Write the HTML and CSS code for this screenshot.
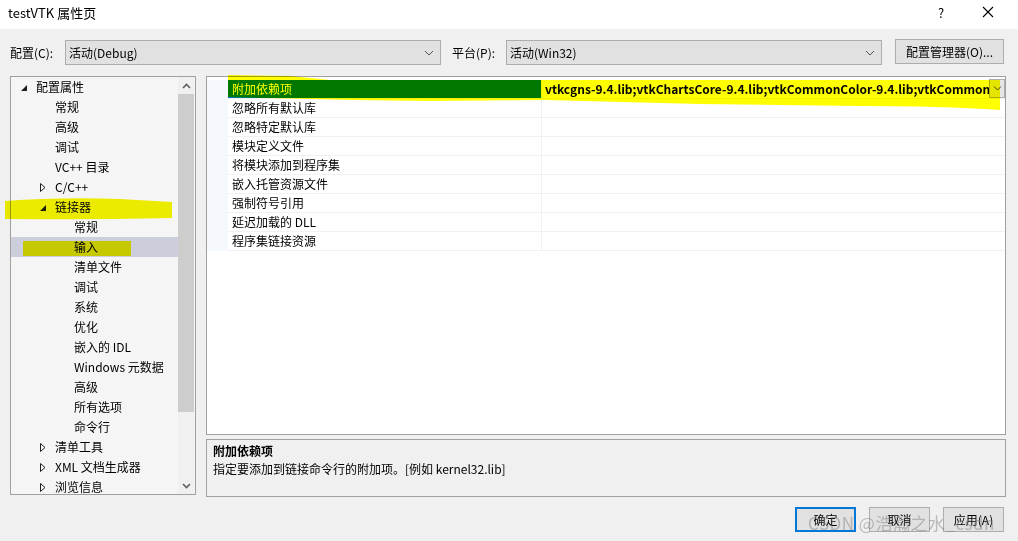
FILE: index.html
```html
<!DOCTYPE html>
<html lang="zh-CN">
<head>
<meta charset="UTF-8">
<title>testVTK 属性页</title>
<link rel="stylesheet" href="styles.css">
</head>
<body>

<div class="titlebar">
  <span class="title">testVTK 属性页</span>
  <span class="help">?</span>
  <span class="close">
    <svg width="12" height="12" viewBox="0 0 12 12"><path d="M1 1L11 11M11 1L1 11" stroke="#000" stroke-width="1.1"/></svg>
  </span>
</div>

<div class="toolbar">
  <label class="lbl">配置(C):</label>
  <div class="combo combo-config">
    <span>活动(Debug)</span>
    <svg class="chev" width="10" height="6" viewBox="0 0 10 6"><path d="M1 1L5 5L9 1" fill="none" stroke="#555"/></svg>
  </div>
  <label class="lbl lbl-platform">平台(P):</label>
  <div class="combo combo-platform">
    <span>活动(Win32)</span>
    <svg class="chev" width="10" height="6" viewBox="0 0 10 6"><path d="M1 1L5 5L9 1" fill="none" stroke="#555"/></svg>
  </div>
  <button class="btn btn-manager">配置管理器(O)...</button>
</div>

<div class="main">
  <div class="tree">
    <ul class="tree-list">
      <li class="lv0"><svg class="arrow" width="6" height="6" viewBox="0 0 6 6"><path d="M6 0V6H0Z" fill="#1e1e1e"/></svg>配置属性</li>
      <li class="lv1">常规</li>
      <li class="lv1">高级</li>
      <li class="lv1">调试</li>
      <li class="lv1">VC++ 目录</li>
      <li class="lv1"><svg class="arrow closed" width="6" height="9" viewBox="0 0 6 9"><path d="M0.5 0.5V8.5L5 4.5Z" fill="none" stroke="#1e1e1e"/></svg>C/C++</li>
      <li class="lv1"><svg class="arrow" width="6" height="6" viewBox="0 0 6 6"><path d="M6 0V6H0Z" fill="#1e1e1e"/></svg>链接器</li>
      <li class="lv2">常规</li>
      <li class="lv2 selected">输入</li>
      <li class="lv2">清单文件</li>
      <li class="lv2">调试</li>
      <li class="lv2">系统</li>
      <li class="lv2">优化</li>
      <li class="lv2">嵌入的 IDL</li>
      <li class="lv2">Windows 元数据</li>
      <li class="lv2">高级</li>
      <li class="lv2">所有选项</li>
      <li class="lv2">命令行</li>
      <li class="lv1"><svg class="arrow closed" width="6" height="9" viewBox="0 0 6 9"><path d="M0.5 0.5V8.5L5 4.5Z" fill="none" stroke="#1e1e1e"/></svg>清单工具</li>
      <li class="lv1"><svg class="arrow closed" width="6" height="9" viewBox="0 0 6 9"><path d="M0.5 0.5V8.5L5 4.5Z" fill="none" stroke="#1e1e1e"/></svg>XML 文档生成器</li>
      <li class="lv1"><svg class="arrow closed" width="6" height="9" viewBox="0 0 6 9"><path d="M0.5 0.5V8.5L5 4.5Z" fill="none" stroke="#1e1e1e"/></svg>浏览信息</li>
    </ul>
    <div class="scrollbar">
      <svg class="sb-arrow" width="9" height="6" viewBox="0 0 9 6"><path d="M1 5L4.5 1.5L8 5" fill="none" stroke="#606060" stroke-width="1.6"/></svg>
      <div class="sb-track"><div class="sb-thumb"></div></div>
      <svg class="sb-arrow" width="9" height="6" viewBox="0 0 9 6"><path d="M1 1L4.5 4.5L8 1" fill="none" stroke="#606060" stroke-width="1.6"/></svg>
    </div>
  </div>

  <div class="right">
    <div class="grid">
      <div class="gutter"></div>
      <div class="rows">
        <div class="row first">
          <div class="name">附加依赖项</div>
          <div class="value">
            <span class="value-text">vtkcgns-9.4.lib;vtkChartsCore-9.4.lib;vtkCommonColor-9.4.lib;vtkCommonComputationalGeometry-9.4.lib</span>
            <span class="drop">
              <svg width="9" height="5" viewBox="0 0 9 5"><path d="M1 0.5L4.5 4L8 0.5" fill="none" stroke="#444"/></svg>
            </span>
          </div>
        </div>
        <div class="row"><div class="name">忽略所有默认库</div><div class="value"></div></div>
        <div class="row"><div class="name">忽略特定默认库</div><div class="value"></div></div>
        <div class="row"><div class="name">模块定义文件</div><div class="value"></div></div>
        <div class="row"><div class="name">将模块添加到程序集</div><div class="value"></div></div>
        <div class="row"><div class="name">嵌入托管资源文件</div><div class="value"></div></div>
        <div class="row"><div class="name">强制符号引用</div><div class="value"></div></div>
        <div class="row"><div class="name">延迟加载的 DLL</div><div class="value"></div></div>
        <div class="row"><div class="name">程序集链接资源</div><div class="value"></div></div>
      </div>
    </div>
    <div class="desc">
      <div class="desc-title">附加依赖项</div>
      <div class="desc-text">指定要添加到链接命令行的附加项。[例如 kernel32.lib]</div>
    </div>
  </div>
</div>

<div class="footer">
  <button class="btn btn-ok">确定</button>
  <button class="btn">取消</button>
  <button class="btn">应用(A)</button>
</div>

<!-- highlighter strokes drawn over the screenshot -->
<svg class="marker" width="1018" height="541" viewBox="0 0 1018 541">
  <path d="M5 201 Q60 197 120 199 L172 202 L172 218 Q90 220 5 219 Z" fill="#f5f500"/>
  <rect x="23" y="241" width="108" height="15" fill="#f8f800"/>
  <path d="M228 75 L290 76 L330 80 L545 80 L1000 80 L1000 110 Q940 106 860 106 L700 104 L545 100 L430 101 Q330 100 228 97 Z" fill="#ffff00"/>
</svg>

<div class="watermark">CSDN @浩瀚之水_csdn</div>

</body>
</html>
```

FILE: styles.css
```css
body {
  margin: 0;
  width: 1018px;
  height: 541px;
  overflow: hidden;
  position: relative;
  background-color: #f0f0f0;
  font-family: "Noto Sans CJK SC", "Microsoft YaHei", sans-serif;
  font-size: 12px;
  color: #000;
}
ul { margin: 0; padding: 0; list-style: none; }

.titlebar {
  height: 29px;
  background-color: #fff;
  display: flex;
  align-items: center;
  padding-left: 8px;
  font-size: 13px;
}
.titlebar .title { flex: 1; margin-top: -5px; }
.titlebar .help { width: 44px; margin-top: -5px; font-size: 13px; }
.titlebar .close { width: 36px; margin-top: -4px; }

.toolbar {
  height: 47px;
  display: flex;
  align-items: center;
  padding-left: 10px;
}
.lbl { width: 55px; line-height: 24px; }
.lbl-platform { width: 54px; margin-left: 11px; }
.combo {
  box-sizing: border-box;
  width: 376px;
  height: 25px;
  border: 1px solid #adadad;
  background-color: #e1e1e1;
  display: flex;
  align-items: center;
  padding-left: 3px;
}
.combo span { flex: 1; }
.combo .chev { margin-right: 6px; }

.btn {
  box-sizing: border-box;
  height: 25px;
  border: 1px solid #adadad;
  background-color: #e1e1e1;
  font-family: inherit;
  font-size: 12px;
  padding: 0;
}
.btn-manager { width: 109px; margin-left: 13px; margin-top: -2px; }

.main {
  display: flex;
  padding-left: 10px;
  height: 421px;
}
.tree {
  box-sizing: border-box;
  width: 186px;
  height: 419px;
  border: 1px solid #a0a0a0;
  background-color: #f5f5f5;
  display: flex;
  overflow: hidden;
}
.tree-list { flex: 1; overflow: hidden; }
.tree-list li {
  height: 20px;
  line-height: 20px;
  position: relative;
  white-space: nowrap;
}
.lv0 { padding-left: 25px; }
.lv1 { padding-left: 44px; }
.lv2 { padding-left: 63px; }
.tree-list li.selected { background-color: #cccedb; }

.arrow {
  position: absolute;
  top: 8px;
}
.arrow.closed { top: 6px; }
.lv0 .arrow { left: 10px; }
.lv1 .arrow { left: 29px; }

.scrollbar {
  width: 16px;
  margin-right: 1px;
  background-color: #f0f0f0;
  display: flex;
  flex-direction: column;
  align-items: center;
}
.sb-arrow { margin: 6px 0 5px; }
.sb-track { flex: 1; width: 100%; }
.sb-thumb { height: 318px; background-color: #cdcdcd; }

.right {
  margin-left: 10px;
  width: 800px;
  display: flex;
  flex-direction: column;
  gap: 4px;
}
.grid {
  box-sizing: border-box;
  height: 359px;
  border: 1px solid #a0a0a0;
  background-color: #fff;
  display: flex;
  padding-top: 3px;
}
.gutter { width: 21px; flex-shrink: 0; height: 171px; background-color: #f5f8fc; }
.rows { flex: 1; min-width: 0; }
.row {
  display: flex;
  height: 19px;
  box-sizing: border-box;
  border-bottom: 1px solid #f0f0f5;
}
.row .name {
  width: 314px;
  flex-shrink: 0;
  line-height: 18px;
  padding-left: 4px;
  box-sizing: border-box;
  border-right: 1px solid #f0f0f5;
}
.row .value { flex: 1; display: flex; min-width: 0; }
.row.first .name { background-color: #0078d7; color: #fff; }
.value-text {
  flex: 1;
  min-width: 0;
  overflow: hidden;
  white-space: nowrap;
  font-weight: bold;
  padding-left: 3px;
  line-height: 18px;
}
.drop {
  box-sizing: border-box;
  flex-shrink: 0;
  width: 16px;
  height: 19px;
  border: 1px solid #adadad;
  background-color: #e5e5e5;
  display: flex;
  align-items: center;
  justify-content: center;
  margin-top: -1px;
}

.desc {
  box-sizing: border-box;
  height: 58px;
  border: 1px solid #a0a0a0;
  padding: 2px 6px;
  line-height: 18px;
}
.desc-title { font-weight: bold; }

.footer {
  display: flex;
  justify-content: flex-end;
  gap: 13px;
  padding-right: 14px;
  margin-top: 10px;
}
.footer .btn { width: 61px; }
.btn-ok { border: 2px solid #0078d7; }

.marker {
  position: absolute;
  left: 0;
  top: 0;
  mix-blend-mode: multiply;
  pointer-events: none;
}
.watermark {
  position: absolute;
  left: 808px;
  top: 510px;
  font-size: 17px;
  color: rgba(120, 120, 120, 0.45);
  white-space: nowrap;
  letter-spacing: 0.5px;
}
```
